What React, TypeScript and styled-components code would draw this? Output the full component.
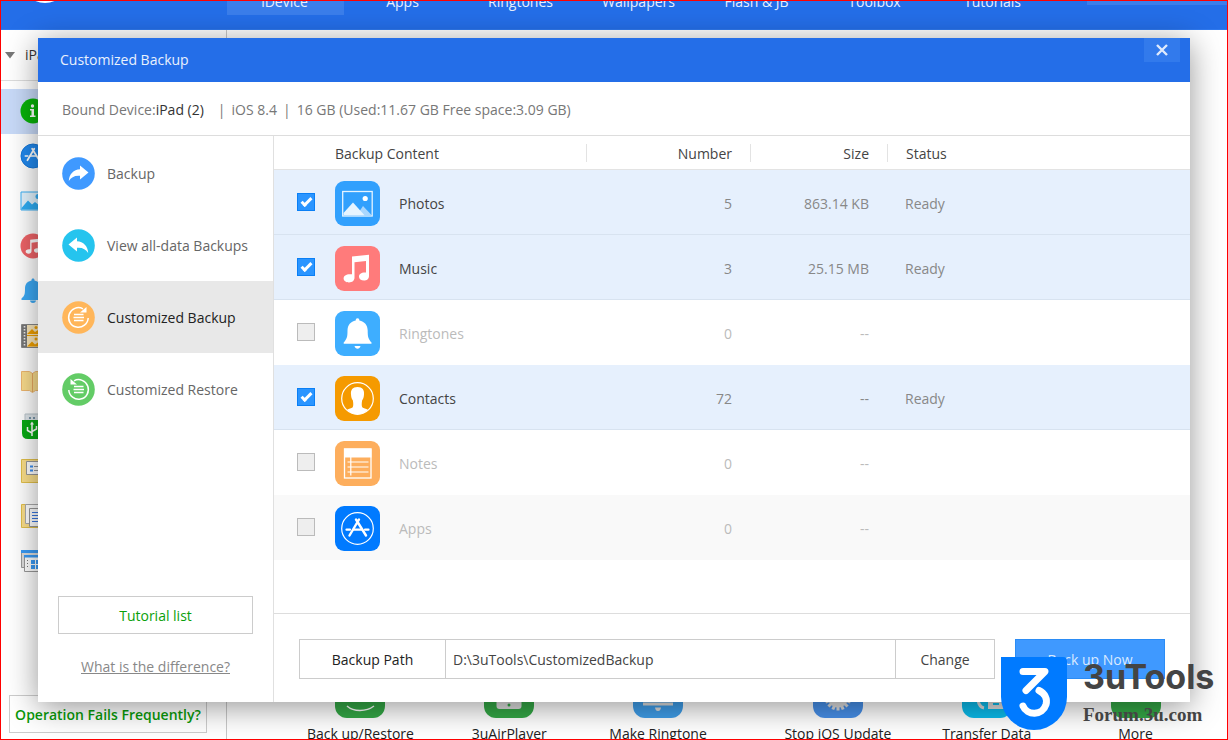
import React, { useState } from "react";
import styled, { createGlobalStyle } from "styled-components";

const GlobalStyle = createGlobalStyle`
  *, *::before, *::after { box-sizing: border-box; }
  body {
    margin: 0;
    background: #fff;
    color: #333;
    font: 14px/20px "Open Sans", "Noto Sans", sans-serif;
  }
  button, input { font: inherit; color: inherit; }
  svg { display: block; flex: none; }
`;

const Frame = styled.div`
  position: relative;
  display: flex;
  flex-direction: column;
  height: 100vh;
  overflow: hidden;
  border: 1px solid #f00;
`;

/* ---------- main window behind the dialog ---------- */

const TopBar = styled.header`
  display: flex;
  align-items: flex-end;
  justify-content: space-between;
  height: 29px;
  flex: none;
  overflow: hidden;
  background: #246ee8;
  border-bottom: 1px solid #2f79ee;
`;

const Brand = styled.div`
  width: 226px;
  height: 76px;
  flex: none;
  padding: 0 0 26px 19px;
`;

const Nav = styled.nav`
  display: flex;
  flex: 1;
  gap: 1px;
  padding-bottom: 14px;
`;

const NavTab = styled.a<{ $active?: boolean }>`
  display: flex;
  align-items: flex-end;
  justify-content: center;
  width: 117px;
  height: 60px;
  padding: 0 2px 3px 0;
  color: #e6effc;
  text-decoration: none;
  background: ${(p) => (p.$active ? "#3b7eeb" : "transparent")};
`;

const SearchSlot = styled.div`
  width: 140px;
  height: 24px;
  margin-bottom: 24px;
  background: #3b7eeb;
`;

const Workspace = styled.div`
  display: flex;
  flex: 1;
  min-height: 0;
`;

const DevicePane = styled.aside`
  display: flex;
  flex-direction: column;
  width: 226px;
  flex: none;
  border-right: 1px solid #c8c8c8;
`;

const DeviceHead = styled.div`
  display: flex;
  align-items: center;
  gap: 10px;
  height: 51px;
  padding-left: 4px;
  border-bottom: 1px solid #ddd;
  margin-bottom: 8px;
`;

const DeviceItem = styled.div<{ $active?: boolean }>`
  display: flex;
  align-items: center;
  height: 45px;
  padding: 0 0 2px 19px;
  background: ${(p) => (p.$active ? "#c8daf8" : "transparent")};
`;

const HelpButton = styled.button`
  height: 38px;
  margin: auto 19px 6px 8px;
  padding: 2px 0 0;
  border: 1px solid #ccc;
  background: #fff;
  color: #0a9a0a;
  font-weight: 600;
  white-space: nowrap;
`;

const Stage = styled.main`
  display: flex;
  flex: 1;
  align-items: flex-end;
  min-width: 0;
`;

const Tiles = styled.div`
  display: flex;
  flex: 1;
  gap: 31px;
  height: 71px;
  padding: 0 17px 0 59px;
  overflow: hidden;
`;

const TileGroup = styled.div`
  display: flex;
  flex: 1;
`;

const Tile = styled.div`
  display: flex;
  flex: 1;
  flex-direction: column;
  align-items: center;
  gap: 6px;
  color: #222;
  white-space: nowrap;
`;

const TileIcon = styled.div<{ $color: string }>`
  width: 50px;
  height: 50px;
  flex: none;
  border-radius: 12px;
  background: ${(p) => p.$color};
`;

/* ---------- dialog ---------- */

const Dialog = styled.section`
  position: absolute;
  inset: 37px;
  display: flex;
  flex-direction: column;
  background: #fff;
  box-shadow: 0 5px 30px rgba(0, 0, 0, 0.42);
`;

const TitleBar = styled.header`
  display: flex;
  justify-content: space-between;
  height: 44px;
  flex: none;
  padding: 0 10px 0 22px;
  background: #246ee8;
  color: #e9f1fd;
`;

const Title = styled.h1`
  margin: 0;
  font-size: 14px;
  font-weight: 400;
  line-height: 44px;
`;

const CloseButton = styled.button`
  display: flex;
  align-items: center;
  justify-content: center;
  width: 36px;
  height: 24px;
  padding: 0;
  border: 0;
  background: #327aec;
  color: #dfeafc;
`;

const BoundBar = styled.div`
  display: flex;
  gap: 6px;
  height: 54px;
  flex: none;
  padding-left: 24px;
  border-bottom: 1px solid #ddd;
  color: #777;
  line-height: 55px;
  white-space: nowrap;

  strong { color: #333; font-weight: 400; margin-right: 8px; }
`;

const Content = styled.div`
  display: flex;
  flex: 1;
  min-height: 0;
`;

const Side = styled.nav`
  display: flex;
  flex-direction: column;
  width: 236px;
  flex: none;
  padding-top: 1px;
  border-right: 1px solid #e0e0e0;
`;

const SideItem = styled.a<{ $active?: boolean }>`
  display: flex;
  align-items: center;
  gap: 12px;
  height: 72px;
  padding-left: 24px;
  color: ${(p) => (p.$active ? "#222" : "#666")};
  background: ${(p) => (p.$active ? "#e8e8e8" : "transparent")};
  text-decoration: none;
`;

const SideText = styled.span`
  padding-top: 2px;
`;

const SideFoot = styled.div`
  display: flex;
  flex-direction: column;
  gap: 23px;
  margin-top: auto;
  padding: 0 20px 25px;
  text-align: center;
`;

const TutorialButton = styled.button`
  height: 38px;
  padding: 2px 0 0;
  border: 1px solid #ccc;
  background: #fff;
  color: #0a9f0a;
`;

const HelpLink = styled.a`
  color: #888;
  text-decoration: underline;
`;

const Panel = styled.div`
  display: flex;
  flex: 1;
  flex-direction: column;
  min-width: 0;
`;

const DataTable = styled.table`
  width: 100%;
  table-layout: fixed;
  border-collapse: separate;
  border-spacing: 0;
`;

const HeadCell = styled.th<{ $width?: number; $align?: string }>`
  width: ${(p) => (p.$width ? `${p.$width}px` : "auto")};
  height: 34px;
  padding: 0;
  border-bottom: 1px solid #e3e3e3;
  color: #444;
  font-weight: 400;
  text-align: ${(p) => p.$align ?? "left"};
`;

const HeadLabel = styled.div<{ $divided?: boolean; $indent?: boolean }>`
  height: 18px;
  padding: 0 18px 0 ${(p) => (p.$indent ? "18px" : "0")};
  border-right: ${(p) => (p.$divided ? "1px solid #e3e3e3" : "0")};
  line-height: 20px;
`;

const Row = styled.tr<{ $state: "ready" | "idle" | "shaded" }>`
  background: ${(p) =>
    ({ ready: "#e6f0fd", idle: "#fff", shaded: "#f9f9f9" })[p.$state]};
  color: ${(p) => (p.$state === "ready" ? "#888" : "#bbb")};

  td {
    border-bottom: 1px solid
      ${(p) => ({ ready: "#d8e3f0", idle: "#fff", shaded: "#f9f9f9" })[p.$state]};
  }
`;

const Cell = styled.td<{ $align?: string }>`
  height: 65px;
  padding: 3px 19px 0 17px;
  text-align: ${(p) => p.$align ?? "left"};
`;

const CheckCell = styled.td`
  padding: 0 0 0 23px;
`;

const ItemCell = styled.td`
  padding: 2px 0 0;
`;

const ItemLabel = styled.label<{ $ready: boolean }>`
  display: flex;
  align-items: center;
  gap: 19px;
  color: ${(p) => (p.$ready ? "#444" : "#bbb")};
`;

const ItemName = styled.span`
  padding-top: 2px;
`;

const Check = styled.input`
  appearance: none;
  display: block;
  width: 18px;
  height: 18px;
  margin: 0;
  border: 1px solid #bbb;
  background: #eee;

  &:checked {
    border-color: #0a7ff5;
    background: #2b95ff;
  }

  &:checked::before {
    content: "";
    display: block;
    width: 11px;
    height: 6px;
    margin: 4px 0 0 3px;
    border: solid #fff;
    border-width: 0 0 3px 3px;
    transform: rotate(-45deg);
  }
`;

const PathBar = styled.footer`
  display: flex;
  gap: 20px;
  margin-top: auto;
  padding: 25px 25px 23px;
  border-top: 1px solid #ddd;
`;

const PathGroup = styled.div`
  display: flex;
  flex: 1;
  height: 40px;
  min-width: 0;
  border: 1px solid #ccc;
`;

const PathLabel = styled.label`
  width: 146px;
  flex: none;
  border-right: 1px solid #ccc;
  color: #222;
  line-height: 40px;
  text-align: center;
`;

const PathInput = styled.input`
  flex: 1;
  min-width: 0;
  padding: 2px 7px 0;
  border: 0;
  background: #fff;
  color: #444;
`;

const ChangeButton = styled.button`
  width: 99px;
  padding: 2px 0 0;
  border: 0;
  border-left: 1px solid #ccc;
  background: #fff;
  color: #444;
`;

const PrimaryButton = styled.button`
  width: 150px;
  height: 40px;
  padding: 2px 0 0;
  border: 1px solid #2b8cf5;
  background: #3f99ff;
  color: #d9eaff;
`;

/* ---------- brand mark over the lower right corner ---------- */

const Watermark = styled.div`
  position: absolute;
  right: 12px;
  bottom: 9px;
  display: flex;
  gap: 16px;
  color: #444;
`;

const WatermarkText = styled.div`
  display: flex;
  flex-direction: column;
  gap: 6px;
  width: 132px;
  white-space: nowrap;
`;

const WatermarkName = styled.span`
  font: 700 34px/40px Inter, sans-serif;
`;

const WatermarkSite = styled.span`
  font: 700 19px/24px "Liberation Serif", serif;
`;

/* ---------- drawings ---------- */

const ShareGlyph = ({ flip = false }: { flip?: boolean }) => (
  <g transform={flip ? "translate(33 0) scale(-1 1)" : undefined}>
    <path
      d="M18 8.500 26.500 15.500 18 22.500V18.800C12.500 18.300 9.300 20.300 6.800 24 7.300 17.200 11.500 12.600 18 12.300Z"
      fill="#fff"
    />
  </g>
);

const CycleGlyph = ({ flip = false }: { flip?: boolean }) => (
  <g fill="none" stroke="#fff">
    <g transform={flip ? "translate(33 0) scale(-1 1)" : undefined}>
      <path d="M21 7.800A9.800 9.800 0 1 0 26.200 17" strokeWidth="1.500" />
      <path d="M24.500 6v5.500H18Z" fill="#fff" stroke="none" />
    </g>
    <path d="M12 13.500h9.500M11.500 16.500h10.500M12 19.500h9.500" strokeWidth="1.300" />
  </g>
);

const RoundIcon = ({ color, children }: { color: string; children: React.ReactNode }) => (
  <svg width="33" height="33" viewBox="0 0 33 33" aria-hidden="true">
    <circle cx="16.500" cy="16.500" r="16.300" fill={color} />
    {children}
  </svg>
);

const AppIcon = ({ color, children }: { color: string; children: React.ReactNode }) => (
  <svg width="45" height="45" viewBox="0 0 45 45" aria-hidden="true">
    <rect width="45" height="45" rx="9" fill={color} />
    {children}
  </svg>
);

const NoteShape = () => (
  <path
    d="M17 10.500 34 8.800V30c0 3-2.300 4.600-5 4.600-3 0-5-1.600-5-3.900 0-2.800 2.700-4.600 7-4.100V15l-11.500 1.300V31.500c0 3.200-2.400 4.900-5.500 4.900S8.600 34.900 8.600 32.500c0-3 3-4.800 8.400-4.200Z"
    fill="#fff"
  />
);

const AppStoreLines = () => (
  <g stroke="#fff" fill="none" strokeLinecap="round">
    <path d="M24 13.500 14.500 29.500M21 13.500 31 29.500" strokeWidth="2.400" />
    <path d="M11.500 23.700h3.500M18.500 23.700h8M30 23.700h3.500" strokeWidth="2.200" />
  </g>
);

const PhotosIcon = () => (
  <AppIcon color="#31a0fd">
    <rect x="7.700" y="10.500" width="29.500" height="24.500" fill="none" stroke="#e6f4ff" strokeWidth="1.300" />
    <path d="m22 34 6-9 8.500 9Z" fill="#a9d7fe" />
    <path d="M8.500 34.300V32L18 21.500 29.500 34.300Z" fill="#e6f4ff" />
    <circle cx="30.200" cy="17.500" r="2.600" fill="#fff" />
  </AppIcon>
);

const MusicIcon = () => (
  <AppIcon color="#ff7b7b">
    <NoteShape />
  </AppIcon>
);

const BellIcon = () => (
  <AppIcon color="#3eaeff">
    <path
      d="M22.500 7.200c1.300 0 1.800.8 1.900 2.200 5 1 8.300 4.600 8.300 10.100 0 6 .3 8.200 3.800 12v1.300H8.700v-1.300c3.500-3.800 3.800-6 3.800-12 0-5.500 3.200-9.100 8.200-10.100.1-1.400.6-2.200 1.800-2.200Z"
      fill="#fff"
    />
    <path d="M19.500 35h6c-.5 1.900-1.500 2.700-3 2.700s-2.500-.8-3-2.700Z" fill="#fff" />
  </AppIcon>
);

const ContactsIcon = () => (
  <AppIcon color="#f59a00">
    <circle cx="22.500" cy="22.500" r="15.800" fill="none" stroke="#fff" strokeWidth="1.200" />
    <path
      d="M22.500 11c5 0 7 3 6.500 7.500-.1 2.500-.8 4.500-1.900 6-.6 3.400-.5 6 .4 7 1 .9 3.500 1 5.400 2.300-2.600 3-6 4.500-10.400 4.500s-7.800-1.500-10.400-4.500c1.900-1.300 4.400-1.400 5.400-2.300.9-1 1-3.600.4-7-1.100-1.500-1.800-3.500-1.900-6C15.500 14 17.500 11 22.500 11Z"
      fill="#fff"
    />
  </AppIcon>
);

const NotesIcon = () => (
  <AppIcon color="#fdae5d">
    <rect x="9.500" y="8" width="26.500" height="29" fill="none" stroke="#fff" strokeWidth="1.300" />
    <path d="M9 7.500h27.500V16.500H9Z" fill="#fff" />
    <path d="M15.800 16v18.500M12.500 21h21M12.500 26h21M12.500 31h21" stroke="#fff" strokeWidth="1.200" />
  </AppIcon>
);

const AppsIcon = () => (
  <AppIcon color="#007aff">
    <circle cx="22.500" cy="22.500" r="15.800" fill="none" stroke="#fff" strokeWidth="1.200" />
    <AppStoreLines />
  </AppIcon>
);

const Small = ({ children }: { children: React.ReactNode }) => (
  <svg width="26" height="26" viewBox="0 0 26 26" aria-hidden="true">
    {children}
  </svg>
);

const deviceIcons: React.ReactNode[] = [
  <Small key="info">
    <circle cx="13" cy="13" r="12.500" fill="#08b308" />
    <circle cx="12.500" cy="8" r="1.700" fill="#fff" />
    <path d="M10 11h4v6.500h1.500V19H10v-1.500h1.500v-5H10Z" fill="#fff" />
  </Small>,
  <Small key="apps">
    <circle cx="13" cy="13" r="12" fill="#2189ee" stroke="#1677d8" />
    <g transform="translate(-3 -4) scale(.72)">
      <AppStoreLines />
    </g>
  </Small>,
  <Small key="photos">
    <path d="M1 4h24v18H1Z" fill="#e3f4fe" stroke="#3bb0f5" />
    <path d="M1.500 20 8 12.500l4 4 3-2.500 9.500 7.500h-23Z" fill="#2faef5" />
    <circle cx="18" cy="8.500" r="2.500" fill="#3bb0f5" />
  </Small>,
  <Small key="music">
    <circle cx="13" cy="13" r="12.500" fill="#f06468" />
    <g transform="translate(1 1) scale(.54)">
      <NoteShape />
    </g>
  </Small>,
  <Small key="bell">
    <path d="M13 .5c1 0 1.500.6 1.500 2 4 .8 6.500 3.500 6.500 8 0 6 .5 7.500 3.500 10v1.500h-23v-1.500c3-2.500 3.500-4 3.500-10 0-4.500 2.500-7.200 6.500-8 0-1.400.5-2 1.500-2ZM10 22.500h6c-.4 1.800-1.500 2.500-3 2.500s-2.600-.7-3-2.500Z" fill="#3ba9f5" />
  </Small>,
  <Small key="video">
    <path d="M1.500 1.500h24v23h-24Z" fill="#f7e6bd" stroke="#888" />
    <path d="M2 2h5v22H2Z" fill="#777" />
    <path d="M4.500 3v21" stroke="#eee" strokeWidth="1.600" strokeDasharray="1.600 1.400" />
    <path d="M7 12.500h19" stroke="#f0a000" />
    <path d="m7 11 5-5 3 3 3-2 4 4ZM7 23.500l5-5 3 3 3-2 4 4Z" fill="#f0a000" />
    <circle cx="16" cy="4.500" r="1.500" fill="#f0a000" />
    <circle cx="16" cy="16" r="1.500" fill="#f0a000" />
  </Small>,
  <Small key="books">
    <path d="M1.500 3.500h8l3 2 3-2h9v19h-9l-3 2-3-2h-8Z" fill="#fbdd8d" stroke="#efb870" />
    <path d="M12.500 5v19" stroke="#e8a960" />
  </Small>,
  <Small key="usb">
    <path d="M5 1h17v7H5Z" fill="#dfe6ea" stroke="#b9c4ca" />
    <path d="M9 4h2v2H9ZM13 4h2v2h-2Z" fill="#7a96aa" />
    <path d="M2 7h22v13q0 6-6 6H8q-6 0-6-6Z" fill="#08ab14" />
    <path d="M12 10v13M7.500 14v3.500l4.500 2.500M16.500 13v3l-4.500 2.500" stroke="#fff" strokeWidth="1.500" fill="none" />
    <path d="m12 8.500 2 3h-4Z" fill="#fff" />
  </Small>,
  <Small key="folder-list">
    <path d="M1.500 1.500h23v23h-23Z" fill="#fbdf8b" stroke="#e2c04b" />
    <path d="M6.500 3.500h18v13h-18Z" fill="#fff" stroke="#999" />
    <path d="M10 7.500h3v2h-3ZM10 11.500h3v2h-3Z" fill="#3b8ef0" />
    <path d="M14 8.500h8M14 12.500h8" stroke="#999" />
  </Small>,
  <Small key="folder-doc">
    <path d="M1.500 1.500h23v23h-23Z" fill="#fbdf8b" stroke="#e2c04b" />
    <path d="M5.500 1.500h14v19h-14Z" fill="#fff" stroke="#aaa" />
    <path d="M9.500 5.500h15v18h-15Z" fill="#fff" stroke="#999" />
    <path d="M12 9.500h9M12 12.500h9M12 15.500h9M12 18.500h9" stroke="#3b78e0" />
  </Small>,
  <Small key="windows">
    <path d="M1.500 2.500h22v17h-22Z" fill="#ddd" stroke="#999" />
    <path d="M1 2h24v3H1Z" fill="#3b9bf5" />
    <path d="M4.500 7.500h20v16h-20Z" fill="#fff" stroke="#999" />
    <path d="M4 7h21v2.500H4Z" fill="#3b9bf5" />
    <path d="M11 12h4v4h-4ZM16 12h4v4h-4ZM11 17h4v4h-4ZM16 17h4v4h-4Z" fill="#3b9bf5" />
    <path d="M7.500 12v9" stroke="#777" strokeDasharray="1 2" />
  </Small>,
];

const TileArt = ({ children }: { children?: React.ReactNode }) => (
  <svg width="50" height="50" viewBox="0 0 50 50" fill="none" aria-hidden="true">
    {children}
  </svg>
);

const gearTeeth = Array.from({ length: 16 }, (_, i) => i * 22.5);

const tileGroups = [
  [
    { label: "Back up/Restore", color: "#34a846", art: <path d="M12 38q5 4.500 13 4.500T39 38" stroke="#fff" strokeWidth="1.500" /> },
    {
      label: "3uAirPlayer",
      color: "#34a846",
      art: (
        <>
          <rect x="12.500" y="10" width="25" height="31" rx="3" fill="#ddd" />
          <circle cx="25" cy="37" r="1.500" fill="#34a846" />
        </>
      ),
    },
    { label: "Make Ringtone", color: "#3f9eea", art: <path d="M10 34.500h30v3H10ZM22 39.500h6q-.5 3.500-3 3.500t-3-3.500Z" fill="#ddd" /> },
  ],
  [
    {
      label: "Stop iOS Update",
      color: "#4790ea",
      art: (
        <g fill="#ddd">
          <circle cx="25" cy="29" r="10.500" />
          {gearTeeth.map((a) => (
            <path key={a} d="M23.500 15.500h3v5h-3Z" transform={`rotate(${a} 25 29)`} />
          ))}
        </g>
      ),
    },
    {
      label: "Transfer Data",
      color: "#0bbcec",
      art: (
        <>
          <path d="M16 32q1 7 6 8" stroke="#ddd" strokeWidth="3" />
          <path d="M26 20h16v21H26Z" fill="#ddd" />
          <path d="M31 36h6" stroke="#0bbcec" strokeWidth="2" />
        </>
      ),
    },
    { label: "More", color: "#34a846", art: null },
  ],
];

/* ---------- data ---------- */

const navTabs = ["iDevice", "Apps", "Ringtones", "Wallpapers", "Flash & JB", "Toolbox", "Tutorials"];

const sideItems = [
  { label: "Backup", color: "#3f99ff", glyph: <ShareGlyph /> },
  { label: "View all-data Backups", color: "#25c4ee", glyph: <ShareGlyph flip /> },
  { label: "Customized Backup", color: "#ffb65a", glyph: <CycleGlyph />, active: true },
  { label: "Customized Restore", color: "#63cc66", glyph: <CycleGlyph flip /> },
];

const backupItems = [
  { name: "Photos", count: "5", size: "863.14 KB", status: "Ready", icon: <PhotosIcon /> },
  { name: "Music", count: "3", size: "25.15 MB", status: "Ready", icon: <MusicIcon /> },
  { name: "Ringtones", count: "0", size: "--", status: "", icon: <BellIcon /> },
  { name: "Contacts", count: "72", size: "--", status: "Ready", icon: <ContactsIcon /> },
  { name: "Notes", count: "0", size: "--", status: "", icon: <NotesIcon /> },
  { name: "Apps", count: "0", size: "--", status: "", icon: <AppsIcon />, shaded: true },
];

export default function App() {
  const [chosen, setChosen] = useState<string[]>(["Photos", "Music", "Contacts"]);
  const [path, setPath] = useState("D:\\3uTools\\CustomizedBackup");

  const toggle = (name: string) =>
    setChosen((list) => (list.includes(name) ? list.filter((n) => n !== name) : [...list, name]));

  return (
    <Frame>
      <GlobalStyle />
      <TopBar>
        <Brand>
          <svg width="50" height="50" viewBox="0 0 50 50" aria-hidden="true">
            <circle cx="25" cy="25" r="25" fill="#fff" />
          </svg>
        </Brand>
        <Nav>
          {navTabs.map((tab, i) => (
            <NavTab key={tab} href="#" $active={i === 0}>
              {tab}
            </NavTab>
          ))}
        </Nav>
        <SearchSlot />
      </TopBar>

      <Workspace>
        <DevicePane>
          <DeviceHead>
            <svg width="10" height="7" viewBox="0 0 10 7" aria-hidden="true">
              <path d="M0 0h10L5 6.500Z" fill="#777" />
            </svg>
            iPad
          </DeviceHead>
          {deviceIcons.map((icon, i) => (
            <DeviceItem key={i} $active={i === 0}>
              {icon}
            </DeviceItem>
          ))}
          <HelpButton>Operation Fails Frequently?</HelpButton>
        </DevicePane>
        <Stage>
          <Tiles>
            {tileGroups.map((group, i) => (
              <TileGroup key={i}>
                {group.map((tile) => (
                  <Tile key={tile.label}>
                    <TileIcon $color={tile.color}>
                      <TileArt>{tile.art}</TileArt>
                    </TileIcon>
                    {tile.label}
                  </Tile>
                ))}
              </TileGroup>
            ))}
          </Tiles>
        </Stage>
      </Workspace>

      <Dialog role="dialog" aria-labelledby="dialog-title">
        <TitleBar>
          <Title id="dialog-title">Customized Backup</Title>
          <CloseButton aria-label="Close">
            <svg width="12" height="12" viewBox="0 0 12 12" aria-hidden="true">
              <path d="m1 1 10 10M11 1 1 11" stroke="currentColor" strokeWidth="2.400" />
            </svg>
          </CloseButton>
        </TitleBar>
        <BoundBar>
          <span>
            Bound Device:<strong>iPad (2)</strong>
          </span>
          <span>|</span>
          <span>iOS 8.4</span>
          <span>|</span>
          <span>16 GB (Used:11.67 GB Free space:3.09 GB)</span>
        </BoundBar>

        <Content>
          <Side>
            {sideItems.map((item) => (
              <SideItem key={item.label} href="#" $active={item.active}>
                <RoundIcon color={item.color}>{item.glyph}</RoundIcon>
                <SideText>{item.label}</SideText>
              </SideItem>
            ))}
            <SideFoot>
              <TutorialButton>Tutorial list</TutorialButton>
              <HelpLink href="#">What is the difference?</HelpLink>
            </SideFoot>
          </Side>

          <Panel>
            <DataTable>
              <thead>
                <tr>
                  <HeadCell $width={61} aria-label="Selected" />
                  <HeadCell $width={252}>
                    <HeadLabel $divided>Backup Content</HeadLabel>
                  </HeadCell>
                  <HeadCell $width={164} $align="right">
                    <HeadLabel $divided>Number</HeadLabel>
                  </HeadCell>
                  <HeadCell $width={137} $align="right">
                    <HeadLabel $divided>Size</HeadLabel>
                  </HeadCell>
                  <HeadCell>
                    <HeadLabel $indent>Status</HeadLabel>
                  </HeadCell>
                </tr>
              </thead>
              <tbody>
                {backupItems.map((item) => {
                  const ready = item.status === "Ready";
                  const id = `item-${item.name.toLowerCase()}`;
                  return (
                    <Row key={item.name} $state={ready ? "ready" : item.shaded ? "shaded" : "idle"}>
                      <CheckCell>
                        <Check
                          type="checkbox"
                          id={id}
                          checked={chosen.includes(item.name)}
                          onChange={() => toggle(item.name)}
                          disabled={!ready}
                        />
                      </CheckCell>
                      <ItemCell>
                        <ItemLabel htmlFor={id} $ready={ready}>
                          {item.icon}
                          <ItemName>{item.name}</ItemName>
                        </ItemLabel>
                      </ItemCell>
                      <Cell $align="right">{item.count}</Cell>
                      <Cell $align="right">{item.size}</Cell>
                      <Cell>{item.status}</Cell>
                    </Row>
                  );
                })}
              </tbody>
            </DataTable>

            <PathBar>
              <PathGroup>
                <PathLabel htmlFor="backup-path">Backup Path</PathLabel>
                <PathInput id="backup-path" value={path} onChange={(e) => setPath(e.target.value)} />
                <ChangeButton>Change</ChangeButton>
              </PathGroup>
              <PrimaryButton>Back up Now</PrimaryButton>
            </PathBar>
          </Panel>
        </Content>
      </Dialog>

      <Watermark>
        <svg width="66" height="73" viewBox="0 0 66 73" aria-hidden="true">
          <path d="M0 0H62Q66 0 66 4V40A33 33 0 0 1 0 40Z" fill="#007aff" />
          <path
            d="M22 14.500H44L25 33.500M38 33.500C44 36.500 46.500 42 45 47.500 41.500 59 26 59 22 49"
            fill="none"
            stroke="#fff"
            strokeWidth="7"
            strokeLinecap="round"
            strokeLinejoin="round"
          />
        </svg>
        <WatermarkText>
          <WatermarkName>3uTools</WatermarkName>
          <WatermarkSite>Forum.3u.com</WatermarkSite>
        </WatermarkText>
      </Watermark>
    </Frame>
  );
}
